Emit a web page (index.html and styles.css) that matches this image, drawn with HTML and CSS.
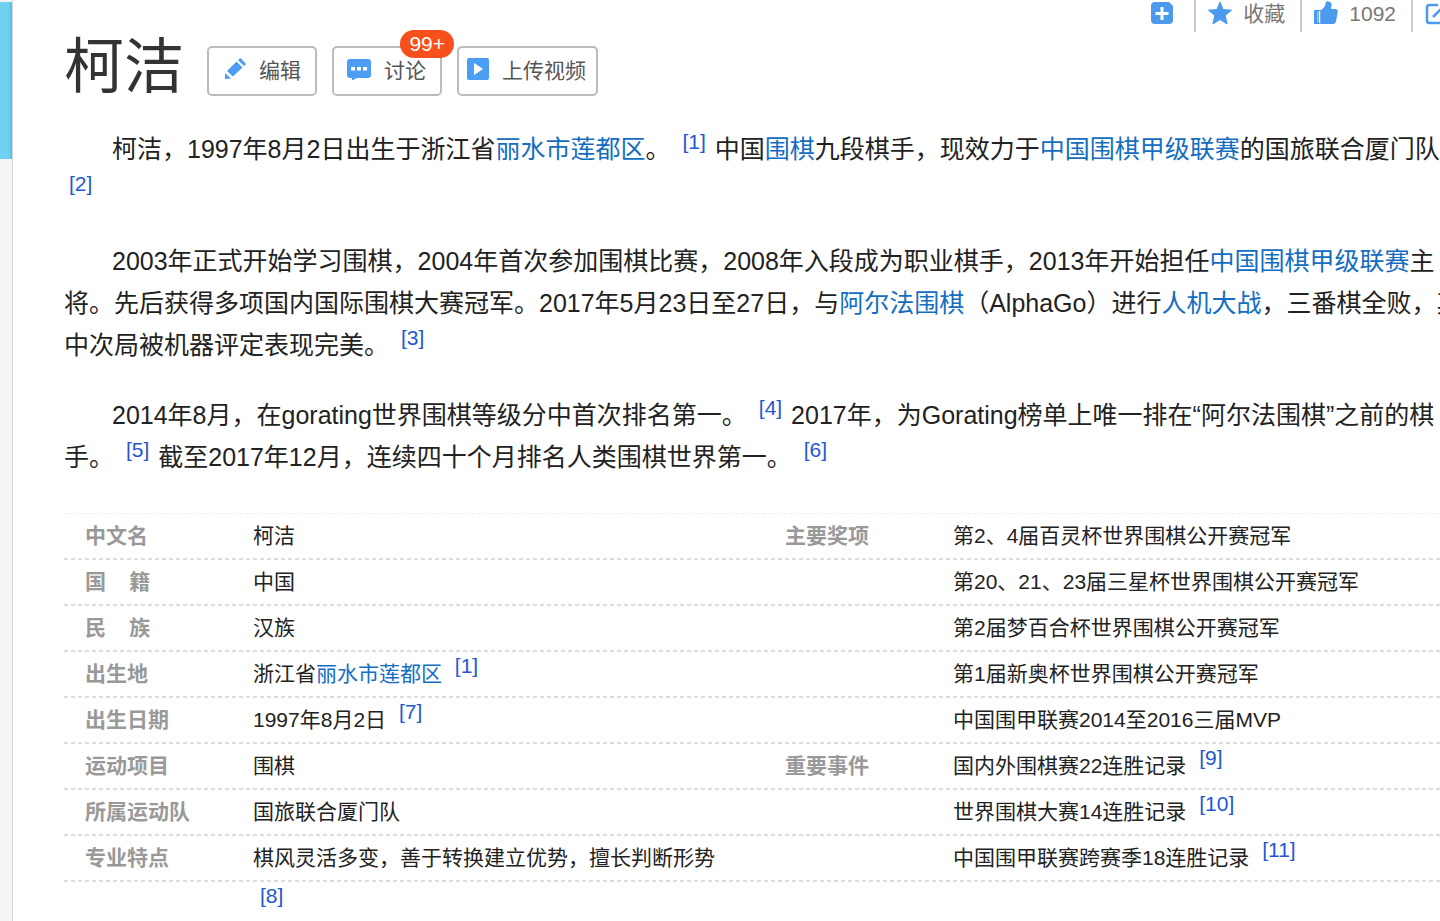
FILE: index.html
```html
<!DOCTYPE html>
<html lang="zh-CN">
<head>
<meta charset="utf-8">
<title>柯洁</title>
<link rel="stylesheet" href="styles.css">
</head>
<body>
<div class="page">
  <div class="rail"><div class="rail-banner"></div></div>
  <main class="content">
    <nav class="toolbar">
      <button class="tool" type="button" aria-label="添加">
        <svg class="tool-icon" viewBox="0 0 24 24"><path fill="#4c9aed" d="M5 1h14l4 4v14q0 4-4 4H5q-4 0-4-4V5q0-4 4-4z"/><path stroke="#fff" stroke-width="3" d="M12 6v13M5.500 12.500h13"/></svg>
      </button>
      <button class="tool" type="button">
        <svg class="tool-icon" viewBox="0 0 24 24"><path fill="#4c9aed" stroke="#4c9aed" stroke-linejoin="round" d="M12 1l3.200 7.600 8.300.6-6.300 5.300 2 8.500-7.200-4.500L4.800 23l2-8.500L.5 9.200l8.300-.6z"/></svg>
        <span>收藏</span>
      </button>
      <button class="tool" type="button">
        <svg class="tool-icon" viewBox="0 0 24 24"><path fill="#4c9aed" d="M0 9h7q4-2 5-8 1-1 3-.5 3 1 2.500 4L17 8h5q2 .5 1.800 2.500L22 20.500q-.8 2.500-3 2.500H0z"/><path stroke="#fff" stroke-width="1.500" d="M5.500 10v12" opacity=".95"/><path stroke="#fff" stroke-width="1" d="M3.500 11v10" opacity=".4"/></svg>
        <span>1092</span>
      </button>
      <button class="tool" type="button" aria-label="分享">
        <svg class="tool-icon" viewBox="0 0 24 24" fill="none" stroke="#4c9aed" stroke-width="2.500"><path d="M13 4H4.500Q2 4 2 6.500v13Q2 22 4.500 22h13q2.500 0 2.500-2.500V13M8 16L20 4M15 3h7v7"/></svg>
      </button>
    </nav>

    <header class="title-row">
      <h1 class="title">柯洁</h1>
      <div class="actions">
        <button class="action" type="button">
          <svg class="action-icon" viewBox="0 0 22 22" fill="#4c9ef5"><path d="M12.500 3.500l6 6L9 18.500l-6-5.500zM14 2l2.500-2L22 6l-2 2zM1 15l6 5.500-6 .5z"/></svg>
          <span>编辑</span>
        </button>
        <button class="action" type="button">
          <svg class="action-icon talk-icon" viewBox="0 0 24 22"><path fill="#4c9ef5" d="M3 1h18q3 0 3 3v13q0 3-3 3H10l-5 2.500V20H3q-3 0-3-3V4q0-3 3-3z"/><path fill="#fff" d="M4 9h4v3.500H4zM10 9h4v3.500h-4zM16 9h4v3.500h-4z"/></svg>
          <span>讨论</span>
          <span class="badge">99+</span>
        </button>
        <button class="action action-video" type="button">
          <svg class="action-icon" viewBox="0 0 22 22"><rect width="22" height="22" rx="2" fill="#4c9ef5"/><path fill="#fff" d="M7 5l9 6-9 6z"/></svg>
          <span>上传视频</span>
        </button>
      </div>
    </header>

    <section class="summary">
      <p>柯洁，1997年8月2日出生于浙江省<a href="#">丽水市莲都区</a>。 <sup><a href="#">[1]</a></sup> 中国<a href="#">围棋</a>九段棋手，现效力于<a href="#">中国围棋甲级联赛</a>的国旅联合厦门队。<br><sup><a href="#">[2]</a></sup></p>
      <p>2003年正式开始学习围棋，2004年首次参加围棋比赛，2008年入段成为职业棋手，2013年开始担任<a href="#">中国围棋甲级联赛</a>主<br>将。先后获得多项国内国际围棋大赛冠军。2017年5月23日至27日，与<a href="#">阿尔法围棋</a>（AlphaGo）进行<a href="#">人机大战</a>，三番棋全败，其<br>中次局被机器评定表现完美。 <sup><a href="#">[3]</a></sup></p>
      <p>2014年8月，在gorating世界围棋等级分中首次排名第一。 <sup><a href="#">[4]</a></sup> 2017年，为Gorating榜单上唯一排在“阿尔法围棋”之前的棋<br>手。 <sup><a href="#">[5]</a></sup> 截至2017年12月，连续四十个月排名人类围棋世界第一。 <sup><a href="#">[6]</a></sup></p>
    </section>

    <table class="facts">
      <colgroup><col class="label-col"><col><col class="label-col"><col></colgroup>
      <tbody>
        <tr><th scope="row">中文名</th><td>柯洁</td><th scope="row">主要奖项</th><td>第2、4届百灵杯世界围棋公开赛冠军</td></tr>
        <tr><th scope="row">国&nbsp;&nbsp;&nbsp;&nbsp;籍</th><td>中国</td><th></th><td>第20、21、23届三星杯世界围棋公开赛冠军</td></tr>
        <tr><th scope="row">民&nbsp;&nbsp;&nbsp;&nbsp;族</th><td>汉族</td><th></th><td>第2届梦百合杯世界围棋公开赛冠军</td></tr>
        <tr><th scope="row">出生地</th><td>浙江省<a href="#">丽水市莲都区</a> <sup><a href="#">[1]</a></sup></td><th></th><td>第1届新奥杯世界围棋公开赛冠军</td></tr>
        <tr><th scope="row">出生日期</th><td>1997年8月2日 <sup><a href="#">[7]</a></sup></td><th></th><td>中国围甲联赛2014至2016三届MVP</td></tr>
        <tr><th scope="row">运动项目</th><td>围棋</td><th scope="row">重要事件</th><td>国内外围棋赛22连胜记录 <sup><a href="#">[9]</a></sup></td></tr>
        <tr><th scope="row">所属运动队</th><td>国旅联合厦门队</td><th></th><td>世界围棋大赛14连胜记录 <sup><a href="#">[10]</a></sup></td></tr>
        <tr><th scope="row">专业特点</th><td>棋风灵活多变，善于转换建立优势，擅长判断形势</td><th></th><td>中国围甲联赛跨赛季18连胜记录 <sup><a href="#">[11]</a></sup></td></tr>
        <tr class="last"><th></th><td><sup><a href="#">[8]</a></sup></td><th></th><td></td></tr>
      </tbody>
    </table>
  </main>
</div>
</body>
</html>
```
FILE: styles.css
```css
* {
  box-sizing: border-box;
}

body {
  margin: 0;
  overflow: hidden;
  background: #fff;
  color: #222;
  font-family: "Liberation Sans", "Noto Sans CJK SC", sans-serif;
}

a {
  color: #136ec2;
  text-decoration: none;
}

button {
  font: inherit;
  cursor: pointer;
}

sup {
  padding: 0 4px 0 7px;
  font-size: 21px;
  line-height: 0;
  vertical-align: super;
}

sup a {
  color: #2458d0;
}

.page {
  display: flex;
  min-height: 100vh;
}

.rail {
  flex: none;
  width: 13px;
  padding-top: 2px;
  background: #f4f4f4;
  border-right: 1px solid #d8d8d8;
}

.rail-banner {
  height: 157px;
  background: linear-gradient(to right, #6fd2f2 70%, #58bde0);
}

/* The article runs slightly past the right edge of the window. */
.content {
  flex: 1;
  min-width: 0;
  margin-right: -24px;
  padding-left: 51px;
}

.toolbar {
  display: flex;
  justify-content: flex-end;
  height: 32px;
}

.tool {
  display: flex;
  gap: 11px;
  padding: 1px 15px 0 12px;
  border: 0;
  border-left: 2px solid #c6cbd6;
  background: none;
  color: #777;
  font-size: 21px;
  line-height: 26px;
}

.tool:first-child {
  padding-right: 20px;
  border-left: 0;
}

.tool-icon {
  width: 24px;
  height: 24px;
}

.title-row {
  display: flex;
  align-items: center;
  gap: 23px;
  height: 68px;
}

.title {
  margin: 0;
  padding-top: 4px;
  color: #333;
  font-size: 60px;
  font-weight: 400;
  line-height: 68px;
}

.actions {
  display: flex;
  gap: 15px;
  padding-top: 9px;
}

.action {
  position: relative;
  display: flex;
  align-items: center;
  gap: 13px;
  height: 50px;
  padding: 0 14px 3px 15px;
  border: 2px solid #bbb;
  border-radius: 5px;
  background: #fff;
  color: #555;
  font-size: 21px;
}

.action + .action {
  padding-left: 13px;
}

.actions .action-video {
  padding: 0 10px 3px 8px;
}

.action-icon {
  width: 22px;
  height: 22px;
}

.talk-icon {
  width: 24px;
}

.badge {
  position: absolute;
  top: -18px;
  right: -14px;
  padding: 0 9px;
  border-radius: 14px;
  background: #f8501c;
  color: #fff;
  font-size: 21px;
  line-height: 28px;
}

.summary {
  margin-top: 28px;
  font-size: 25px;
  line-height: 42px;
  white-space: nowrap;
}

.summary p {
  margin: 0 0 28px;
  text-indent: 48px;
}

.summary sup {
  padding: 0 2px 0 5px;
}

.facts {
  width: 100%;
  margin-top: 35px;
  border-collapse: collapse;
  table-layout: fixed;
  border-top: 1px dashed #eee;
  font-size: 21px;
  line-height: 44px;
  white-space: nowrap;
}

.label-col {
  width: 189px;
}

.facts tr {
  height: 46px;
  background: repeating-linear-gradient(to right, #ddd 0 4px, transparent 4px 7px) bottom / 100% 2px no-repeat;
}

.facts .last {
  background: none;
}

.facts th,
.facts td {
  padding: 0 0 2px;
  text-align: left;
}

.facts th {
  padding-left: 21px;
  color: #999;
  font-weight: 700;
}
```
